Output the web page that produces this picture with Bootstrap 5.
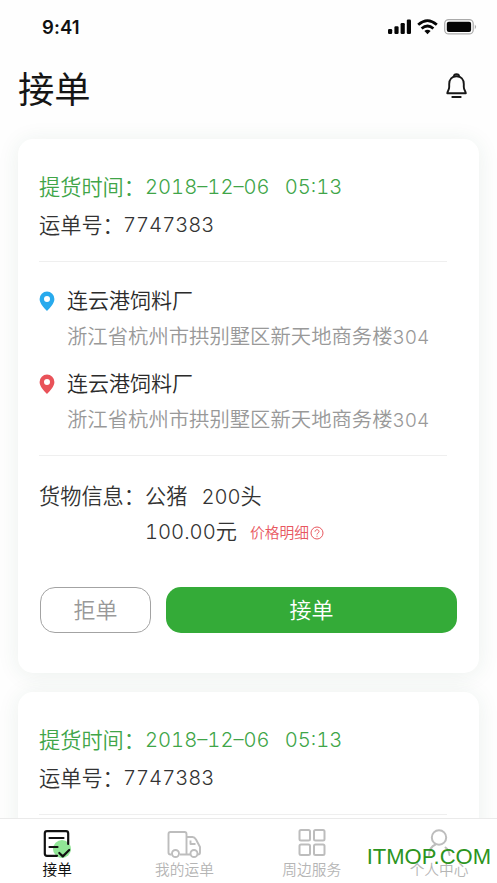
<!DOCTYPE html>
<html lang="zh-CN">
<head>
<meta charset="utf-8">
<meta name="viewport" content="width=device-width, initial-scale=1">
<title>接单</title>
<link href="https://cdn.jsdelivr.net/npm/bootstrap@5.3.0/dist/css/bootstrap.min.css" rel="stylesheet">
<style>
body{font-family:"Inter","Noto Sans CJK SC",sans-serif;font-weight:350;color:#333;background:#fefefe}
.phone{height:883px}
.statusbar{height:54px;padding:0 20px 0 42px}
.clock{font-size:18.5px;font-weight:600;color:#111;line-height:56px;letter-spacing:.1px}
.titlebar{height:85px;padding:0 28px 0 18px}
.titlebar h1{font-family:"Noto Sans CJK SC",sans-serif;font-size:36.3px;font-weight:400;color:#151515;line-height:66px}
.bell{margin-top:17px}
.feed{padding:0 18px;gap:19px;min-height:0}
.order{border:0;border-radius:15px;box-shadow:0 2px 22px rgba(40,95,60,.085);height:534px;padding:30px 22px 0 21px;background:#fff}
.line{font-size:21.2px;line-height:36px;height:38px;white-space:nowrap}
.num{font-size:20.2px;font-feature-settings:"tnum";letter-spacing:0}
.green{color:#40a548}
.rule{height:1px;background:#efefef;margin-right:10px}
.place{line-height:36px;height:36px;font-size:21px;color:#2b2b2b;white-space:nowrap}
.addr{line-height:36px;height:36px;font-size:20.35px;color:#999;padding-left:28px;white-space:nowrap}
.addr .num{font-size:19px}
.pin{width:16px;height:21px;margin-right:12px}
.goods-label{width:106px}
.slip{width:84px}
.clocktime{margin-left:15px}
.stop{margin-top:20px}
.stop2{margin-top:11px}
.addr,.place{position:relative;top:1px}
.rule-low{margin-top:18px}
.goods{margin-top:22px;height:35px}
.price{height:38px}
.heads{margin-left:14px}
.detail{margin-left:13px;height:40px;font-size:14.8px;color:#e8585f}
.detail svg{margin-left:1px}
.acts{gap:15px;margin-top:36px;padding-left:1px}
.btn-refuse,.btn-take{height:46px;border-radius:15px;font-size:22px;font-weight:350;padding:0;line-height:44px}
.btn-refuse{width:111px;border:1.3px solid #a3a3a3;color:#999}
.btn-take{background:#34ab38;color:#fff;border:0}
.tabs{height:65px;background:#fff;border-top:1px solid #eaeaea;padding-top:7px}
.tab{width:127.3px;flex:none;font-size:14.7px;color:#b5b5b5;line-height:20px}
.tab:first-child{margin-left:-6.5px}
.tab svg{height:34px;width:40px}
.tab.on{color:#111;font-weight:400}
.site{right:6px;bottom:12px;font-family:"Liberation Sans",sans-serif;font-size:22px;line-height:28px;color:#2c9420;font-weight:400}
</style>
</head>
<body class="overflow-hidden">
<div class="phone position-relative d-flex flex-column overflow-hidden">
  <header class="flex-shrink-0">
    <div class="statusbar d-flex align-items-center justify-content-between">
      <span class="clock">9:41</span>
      <svg width="91" height="18" viewBox="386 18 91 18">
        <g fill="#050505"><rect x="388" y="29" width="4.2" height="5" rx="1.2"/><rect x="394.4" y="26.2" width="4.2" height="7.8" rx="1.2"/><rect x="400.6" y="23" width="4.2" height="11" rx="1.2"/><rect x="406.8" y="19.5" width="4.2" height="14.5" rx="1.2"/></g>
        <g fill="none" stroke="#050505" stroke-width="2.8"><path d="M418.2 24.8Q427.5 16.5 436.8 24.8"/><path d="M421.6 28.5Q427.5 23.5 433.4 28.5"/></g>
        <path d="M424.4 31Q427.5 28.6 430.6 31L427.5 34.2Z" fill="#050505"/>
        <rect x="444.7" y="19.6" width="28.5" height="14.3" rx="4" fill="none" stroke="#aaa" stroke-width="1.2"/>
        <rect x="446.8" y="21.7" width="24.3" height="10.2" rx="2" fill="#050505"/>
        <path d="M474.8 24.5Q477.4 26.8 474.8 29.2Z" fill="#aaa"/>
      </svg>
    </div>
    <div class="titlebar d-flex justify-content-between align-items-start">
      <h1 class="m-0">接单</h1>
      <svg class="bell" width="25" height="29" viewBox="444 71 25 29" fill="none" stroke="#171717" stroke-width="1.9" stroke-linejoin="round" stroke-linecap="round"><path d="M447.3 93.3H465.8C465.8 91 463.8 90.2 463.8 87V84C463.8 79.3 460.9 76.2 456.5 76.2S449.2 79.3 449.2 84V87C449.2 90.2 447.3 91 447.3 93.3Z"/><path d="M454 76.2C454 73.5 459 73.5 459 76.2M452.3 97H460.7"/></svg>
    </div>
  </header>

  <main class="feed d-flex flex-column flex-grow-1">
    <article class="order card flex-shrink-0">
      <div class="line green d-flex"><span class="goods-label">提货时间：</span><span class="num">2018–12–06</span><span class="num clocktime">05:13</span></div>
      <div class="line d-flex"><span class="slip">运单号：</span><span class="num">7747383</span></div>
      <div class="rule mt-3"></div>
      <div class="place d-flex align-items-center stop"><svg class="pin" viewBox="0 0 16 21"><path fill="#28aaed" fill-rule="evenodd" d="M8 .5A7.4 7.4 0 0 0 .6 7.9C.6 12.5 5 16.5 8 20C11 16.5 15.4 12.5 15.4 7.9A7.4 7.4 0 0 0 8 .5ZM8 5A3 3 0 1 1 8 11A3 3 0 0 1 8 5Z"/></svg>连云港饲料厂</div>
      <div class="addr">浙江省杭州市拱别墅区新天地商务楼<span class="num">304</span></div>
      <div class="place d-flex align-items-center stop2"><svg class="pin" viewBox="0 0 16 21"><path fill="#e95259" fill-rule="evenodd" d="M8 .5A7.4 7.4 0 0 0 .6 7.9C.6 12.5 5 16.5 8 20C11 16.5 15.4 12.5 15.4 7.9A7.4 7.4 0 0 0 8 .5ZM8 5A3 3 0 1 1 8 11A3 3 0 0 1 8 5Z"/></svg>连云港饲料厂</div>
      <div class="addr">浙江省杭州市拱别墅区新天地商务楼<span class="num">304</span></div>
      <div class="rule rule-low"></div>
      <div class="goods d-flex line"><span class="goods-label">货物信息：</span><span>公猪</span><span class="heads"><span class="num">200</span>头</span></div>
      <div class="price d-flex line"><span class="goods-label"></span><span><span class="num">100.00</span>元</span><span class="detail d-flex align-items-center">价格明细<svg width="14" height="14" viewBox="0 0 14 14" fill="none" stroke="#e8585f" stroke-width="1"><circle cx="7" cy="7" r="6"/><path d="M5 5.7C5 3.1 9 3.1 9 5.5C9 7 7 7 7 8.5M7 9.7V10.8"/></svg></span></div>
      <div class="acts d-flex"><button class="btn btn-refuse flex-shrink-0">拒单</button><button class="btn btn-take flex-grow-1">接单</button></div>
    </article>
    <article class="order card flex-shrink-0">
      <div class="line green d-flex"><span class="goods-label">提货时间：</span><span class="num">2018–12–06</span><span class="num clocktime">05:13</span></div>
      <div class="line d-flex"><span class="slip">运单号：</span><span class="num">7747383</span></div>
      <div class="rule mt-3"></div>
    </article>
  </main>

  <nav class="tabs d-flex flex-shrink-0 position-relative">
    <div class="tab on d-flex flex-column align-items-center"><svg viewBox="37 826 40 34"><circle cx="62" cy="849" r="9" fill="#91e696"/><g fill="none" stroke="#111" stroke-width="2.2" stroke-linecap="round" stroke-linejoin="round"><path d="M68.2 844V833.5Q68.2 831.2 66 831.2H47Q44.8 831.2 44.8 833.5V853.5Q44.8 855.8 47 855.8H57M49.5 838H63.5M49.5 847H57.5M59.3 853L62.8 856.4 69.2 850"/></g></svg><span>接单</span></div>
    <div class="tab d-flex flex-column align-items-center"><svg viewBox="164.5 826 40 34" fill="none" stroke="#bdbdbd" stroke-width="1.9" stroke-linejoin="round"><path d="M172 854.5H171Q169 854.5 169 852.5V834Q169 832 171 832H185Q187 832 187 834V854.5H180.5M187 837H193Q195 837 196.5 839.5L200.5 847V852.5Q200.5 854.5 198.5 854.5H198M191 854.5H187M191 840.5V844H196"/><circle cx="176" cy="853.5" r="3.5"/><circle cx="194.5" cy="853.5" r="3.5"/></svg><span>我的运单</span></div>
    <div class="tab d-flex flex-column align-items-center"><svg viewBox="291.5 826 40 34" fill="none" stroke="#bdbdbd" stroke-width="2"><rect x="299" y="830" width="10.5" height="10.5" rx="1.5"/><rect x="313.5" y="830" width="10.5" height="10.5" rx="1.5"/><rect x="299" y="844.5" width="10.5" height="10.5" rx="1.5"/><rect x="313.5" y="844.5" width="10.5" height="10.5" rx="1.5"/></svg><span>周边服务</span></div>
    <div class="tab d-flex flex-column align-items-center"><svg viewBox="419.5 826 40 34" fill="none" stroke="#bdbdbd" stroke-width="2" stroke-linecap="round"><circle cx="439.5" cy="837.5" r="7.2"/><path d="M436 844.5Q430 847 429.5 855M446 847.5Q449.5 850 450 855"/></svg><span>个人中心</span></div>
    <span class="site position-absolute">ITMOP.COM</span>
  </nav>
</div>
<script src="https://cdn.jsdelivr.net/npm/bootstrap@5.3.0/dist/js/bootstrap.bundle.min.js"></script>
</body>
</html>
